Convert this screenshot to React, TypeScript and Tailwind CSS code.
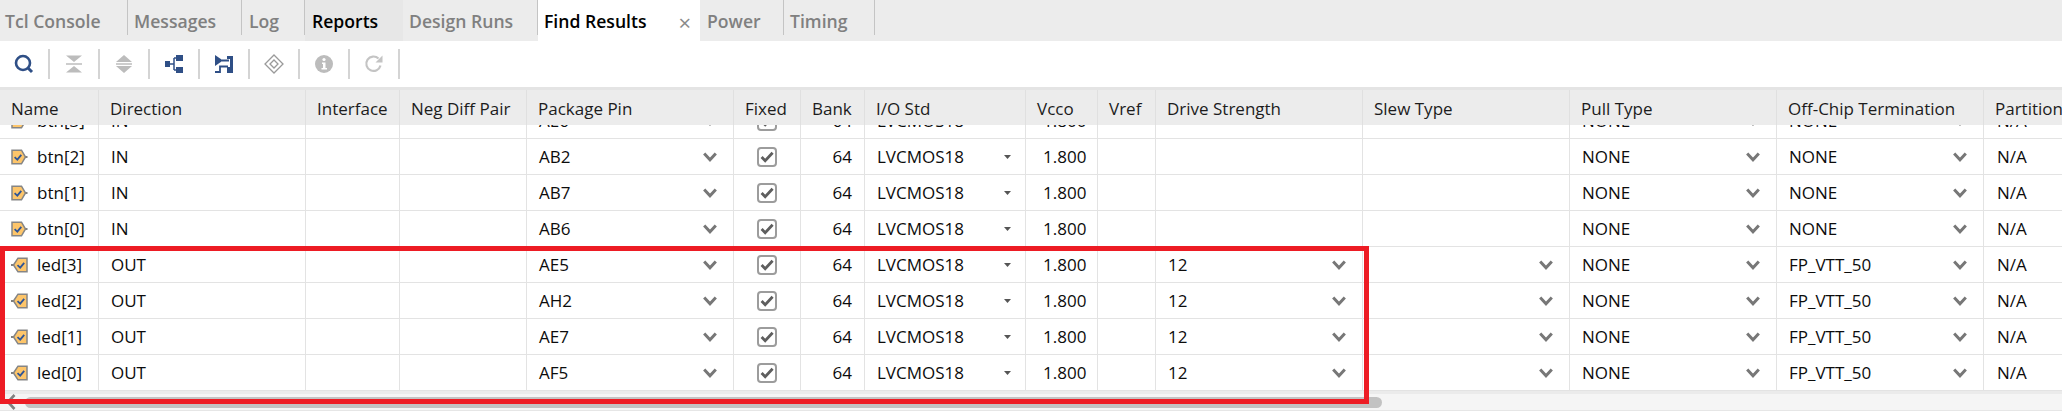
import React from "react";

const widths = [99, 207, 94, 127, 207, 67, 64, 161, 72, 58, 207, 207, 207, 207, 78];
const headers = ["Name", "Direction", "Interface", "Neg Diff Pair", "Package Pin", "Fixed", "Bank", "I/O Std", "Vcco", "Vref", "Drive Strength", "Slew Type", "Pull Type", "Off-Chip Termination", "Partition"];

type Row = { name: string; dir: string; pin: string; drive: string; slew: boolean; term: string; out: boolean };
const rows: Row[] = [
  { name: "btn[3]", dir: "IN", pin: "AE6", drive: "", slew: false, term: "NONE", out: false },
  { name: "btn[2]", dir: "IN", pin: "AB2", drive: "", slew: false, term: "NONE", out: false },
  { name: "btn[1]", dir: "IN", pin: "AB7", drive: "", slew: false, term: "NONE", out: false },
  { name: "btn[0]", dir: "IN", pin: "AB6", drive: "", slew: false, term: "NONE", out: false },
  { name: "led[3]", dir: "OUT", pin: "AE5", drive: "12", slew: true, term: "FP_VTT_50", out: true },
  { name: "led[2]", dir: "OUT", pin: "AH2", drive: "12", slew: true, term: "FP_VTT_50", out: true },
  { name: "led[1]", dir: "OUT", pin: "AE7", drive: "12", slew: true, term: "FP_VTT_50", out: true },
  { name: "led[0]", dir: "OUT", pin: "AF5", drive: "12", slew: true, term: "FP_VTT_50", out: true },
];

function Chevron() {
  return (
    <svg width="14" height="10" viewBox="0 0 14 10" className="shrink-0">
      <path d="M1.2 1.6 L7 7.8 L12.8 1.6" fill="none" stroke="#777777" strokeWidth="3" />
    </svg>
  );
}

function Caret() {
  return (
    <svg width="7" height="4" viewBox="0 0 7 4" className="shrink-0">
      <path d="M0 0 H7 L3.5 4 Z" fill="#555555" />
    </svg>
  );
}

function Check() {
  return (
    <div className="w-5 h-5 rounded-[4px] border-2 border-[#9c9c9c] flex items-center justify-center bg-white">
      <svg width="14" height="12" viewBox="0 0 14 12">
        <path d="M1.6 6 L5.2 9.8 L12.6 1.8" fill="none" stroke="#5e5e5e" strokeWidth="2.8" />
      </svg>
    </div>
  );
}

function PortIcon({ out }: { out: boolean }) {
  if (out) {
    return (
      <svg width="17" height="16" viewBox="0 0 17 16" className="shrink-0">
        <path d="M0 8 H3" stroke="#808080" strokeWidth="2" />
        <path d="M2.5 8 L7 1.2 H16 V14.8 H7 Z" fill="#fdc56a" stroke="#858585" strokeWidth="1.5" />
        <path d="M6.5 8.2 L9.2 10.6 L13.2 5.8" fill="none" stroke="#2f5597" strokeWidth="1.8" />
      </svg>
    );
  }
  return (
    <svg width="17" height="16" viewBox="0 0 17 16" className="shrink-0">
      <path d="M1 1.2 H10.5 L14.5 8 L10.5 14.8 H1 Z" fill="#fdc56a" stroke="#858585" strokeWidth="1.5" />
      <path d="M14.5 8 H16.5" stroke="#808080" strokeWidth="2" />
      <path d="M3.6 8.2 L6.3 10.6 L10.3 5.8" fill="none" stroke="#2f5597" strokeWidth="1.8" />
    </svg>
  );
}

function Cell({ i, children, className = "" }: { i: number; children?: React.ReactNode; className?: string }) {
  return (
    <div style={{ width: widths[i] }} className={`h-full shrink-0 border-r border-[#e3e3e3] flex items-center ${className}`}>
      {children}
    </div>
  );
}

function Select({ text }: { text: string }) {
  return (
    <div className="flex w-full items-center justify-between pl-3 pr-4">
      <span>{text}</span>
      <Chevron />
    </div>
  );
}

const tabs = [
  { label: "Tcl Console", w: 128, cls: "text-[#808080]", pl: "pl-[5px]", sep: true },
  { label: "Messages", w: 114, cls: "text-[#808080]", pl: "pl-[6px]", sep: true },
  { label: "Log", w: 63, cls: "text-[#808080]", pl: "pl-[7px]", sep: true },
  { label: "Reports", w: 98, cls: "text-black bg-[#e7e7e7]", pl: "pl-[7px]", sep: false },
  { label: "Design Runs", w: 135, cls: "text-[#808080]", pl: "pl-[6px]", sep: true },
];

function Tab({ label, w, cls, pl, sep }: { label: string; w: number; cls: string; pl: string; sep: boolean }) {
  return (
    <div style={{ width: w }} className={`h-full shrink-0 flex items-start ${cls}`}>
      <div className={`h-[35px] w-full flex items-center pt-2 ${pl} ${sep ? "border-r border-[#c4c4c4]" : ""}`}>{label}</div>
    </div>
  );
}

function ToolIcon({ children }: { children: React.ReactNode }) {
  return (
    <div className="w-[50px] h-[30px] shrink-0 border-r-2 border-[#d4d4d4] flex items-center justify-center">
      <svg width="22" height="22" viewBox="0 0 22 22">{children}</svg>
    </div>
  );
}

export default function App() {
  return (
    <div
      className="relative w-[2062px] h-[411px] overflow-hidden bg-white text-[17px] text-[#0c0c0c]"
      style={{ fontFamily: '"Open Sans", "Noto Sans", "Liberation Sans", sans-serif' }}
    >
      {/* tabs */}
      <div className="h-[41px] flex bg-[#ececec] font-semibold text-[17.6px]">
        {tabs.map((t) => (
          <Tab key={t.label} {...t} />
        ))}
        <div className="w-[162px] h-full shrink-0 bg-white flex items-start">
          <div className="h-[35px] w-full flex items-center justify-between pt-2 pl-[6px] pr-[9px] text-black">
            <span>Find Results</span>
            <span className="text-[#8a8a8a] text-[22px] font-normal leading-none">×</span>
          </div>
        </div>
        <div className="w-[84px] h-[35px] shrink-0 flex items-center pt-2 pl-[7px] border-r border-[#c4c4c4] text-[#808080]">Power</div>
        <div className="w-[91px] h-[35px] shrink-0 flex items-center pt-2 pl-[6px] border-r border-[#c4c4c4] text-[#808080]">Timing</div>
      </div>

      {/* toolbar */}
      <div className="h-[46px] flex items-center">
        <ToolIcon>
          <circle cx="10" cy="10" r="7" fill="none" stroke="#2f4f86" strokeWidth="2.6" />
          <path d="M15 15 L19 19" stroke="#2f4f86" strokeWidth="3" />
        </ToolIcon>
        <ToolIcon>
          <path d="M3 2.5 H19 L11 9 Z M3 19.5 H19 L11 13 Z" fill="#bcbcbc" />
          <path d="M3 11 H19" stroke="#bcbcbc" strokeWidth="1.5" />
        </ToolIcon>
        <ToolIcon>
          <path d="M11 2 L19 9 H3 Z M11 20 L19 13 H3 Z" fill="#bcbcbc" />
          <path d="M3 11 H19" stroke="#bcbcbc" strokeWidth="1.5" />
        </ToolIcon>
        <ToolIcon>
          <path d="M2 8 H7 V14 H2 Z M13 2 H20 V8 H13 Z M13 14 H20 V20 H13 Z" fill="#2f4f86" />
          <path d="M7 11 H11 M11 5 H13 M11 17 H13 M11 5 V17" fill="none" stroke="#2f4f86" strokeWidth="1.5" />
        </ToolIcon>
        <ToolIcon>
          <path d="M2 2 L10 7.5 L2 13 Z M14 3 H20 V20 H14 V14 H17 V6 H14 Z" fill="#2f4f86" />
          <path d="M9 7.5 H16 M2 19 H7 V13.5 H15" fill="none" stroke="#2f4f86" strokeWidth="1.8" />
        </ToolIcon>
        <ToolIcon>
          <path d="M11 2 L20 11 L11 20 L2 11 Z" fill="none" stroke="#9a9a9a" strokeWidth="1.3" />
          <path d="M11 7 L15 11 L11 15 L7 11 Z" fill="none" stroke="#9a9a9a" strokeWidth="1.3" />
        </ToolIcon>
        <ToolIcon>
          <circle cx="11" cy="11" r="9" fill="#bcbcbc" />
          <circle cx="11" cy="6.5" r="1.6" fill="#ffffff" />
          <path d="M9 9.5 H12.5 V15 H14 V16.5 H8.5 V15 H10 V11 H9 Z" fill="#ffffff" />
        </ToolIcon>
        <ToolIcon>
          <path d="M17.5 12.5 A7.2 7.2 0 1 1 15.5 5.5" fill="none" stroke="#c4c4c4" strokeWidth="2.2" />
          <path d="M19.5 2.5 V9.5 H12.5 Z" fill="#c4c4c4" />
        </ToolIcon>
      </div>

      {/* table */}
      <div className="border-t-[3px] border-[#e4e4e4] relative z-10 h-[38px] flex bg-[#ececec] text-[#1c1c1c]">
        {headers.map((h, i) => (
          <div
            key={h}
            style={{ width: widths[i] }}
            className={`h-full shrink-0 flex items-center pt-[3px] pl-[11px] whitespace-nowrap overflow-hidden ${i < 14 ? "border-r border-[#e0e0e0]" : ""}`}
          >
            {h}
          </div>
        ))}
      </div>
      <div className="h-[266px] overflow-hidden">
        <div className="-mt-[22px]">
          {rows.map((r) => (
            <div key={r.name} className="h-9 flex border-b border-[#e3e3e3]">
              <Cell i={0} className="pl-[11px] gap-[9px]">
                <PortIcon out={r.out} />
                <span>{r.name}</span>
              </Cell>
              <Cell i={1} className="pl-3">{r.dir}</Cell>
              <Cell i={2} />
              <Cell i={3} />
              <Cell i={4}><Select text={r.pin} /></Cell>
              <Cell i={5} className="justify-center"><Check /></Cell>
              <Cell i={6} className="justify-end pr-3">64</Cell>
              <Cell i={7} className="pl-3 pr-[14px] justify-between">
                <span>LVCMOS18</span>
                <Caret />
              </Cell>
              <Cell i={8} className="pl-[17px]">1.800</Cell>
              <Cell i={9} />
              <Cell i={10}>{r.drive ? <Select text={r.drive} /> : null}</Cell>
              <Cell i={11}>{r.slew ? <Select text="" /> : null}</Cell>
              <Cell i={12}><Select text="NONE" /></Cell>
              <Cell i={13}><Select text={r.term} /></Cell>
              <div className="h-full pl-[13px] flex items-center">N/A</div>
            </div>
          ))}
        </div>
      </div>

      {/* horizontal scrollbar */}
      <div className="h-5 bg-[#f5f5f5] border-t-[3px] border-t-[#ebebeb] border-b border-b-[#e6e6e6] flex items-center pl-[6px] gap-[9px]">
        <svg width="10" height="16" viewBox="0 0 10 16" className="shrink-0">
          <path d="M8.5 1 L2 8 L8.5 15" fill="none" stroke="#808080" strokeWidth="2.6" />
        </svg>
        <div className="w-[1357px] h-[11px] rounded-full bg-[#c2c2c2]" />
      </div>

      {/* red annotation */}
      <div className="absolute left-0 top-[246px] w-[1369px] h-[158px] border-[5px] border-[#ed1c24] z-20" />
    </div>
  );
}
